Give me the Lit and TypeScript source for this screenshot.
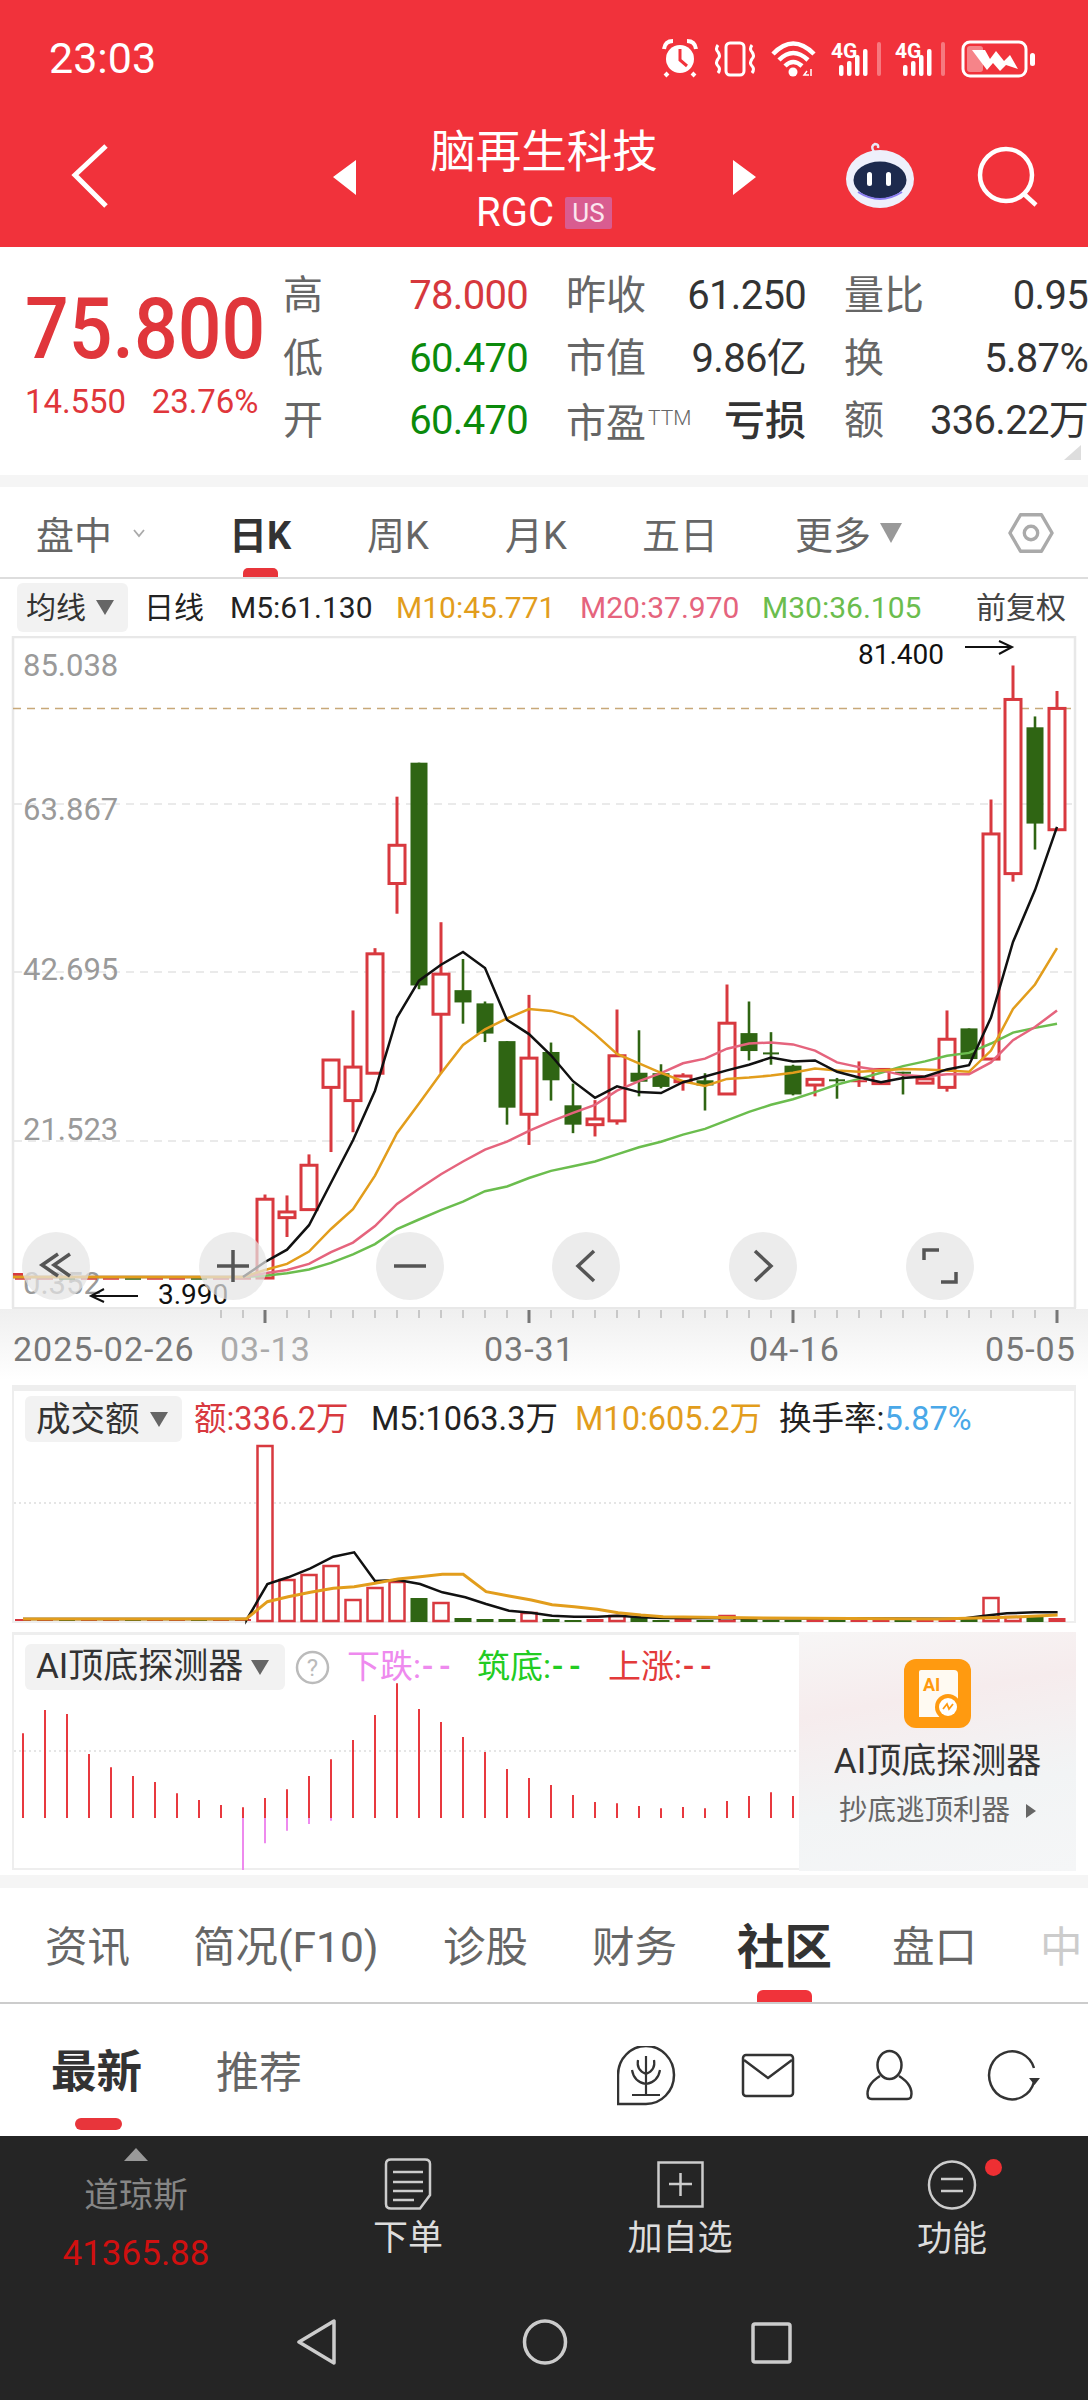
import { LitElement, html, svg, css } from "lit";
import { customElement } from "lit/decorators.js";

// candle data in measured chart units: [type, high, bodyTop, bodyBottom, low]
const CANDLES: [string, number, number, number, number][] = [
  ["r",1175,1185,1352,1352],["r",1177,1212,1224,1265],["r",1090,1113,1207,1207],["r",890,890,948,1085],
  ["r",785,905,976,1043],["r",653,665,918,918],["r",332,435,516,580],["g",260,260,732,740],
  ["r",598,708,793,918],["g",676,742,768,813],["g",766,770,834,852],["g",850,850,991,1027],
  ["r",752,886,1005,1070],["g",853,873,933,976],["g",940,986,1027,1045],["r",975,1015,1027,1052],
  ["r",783,881,1019,1027],["g",827,917,936,967],["g",899,918,947,950],["r",918,924,936,955],
  ["g",918,933,944,997],["r",730,812,962,962],["g",766,833,871,891],["g",831,876,878,900],
  ["g",900,902,963,965],["r",930,931,943,967],["g",928,933,935,972],["r",893,935,941,947],
  ["r",908,910,940,942],["g",915,917,922,963],["r",930,930,939,939],["r",785,846,948,957],
  ["g",823,823,888,888],["r",338,411,888,888],["r",54,126,495,512],["g",162,185,389,444],["r",108,145,402,402],
];
const M5 = [1318,1292,1240,1150,1060,955,800,722,688,661,695,805,835,880,935,970,946,958,960,937,925,912,900,885,893,891,915,927,937,928,925,910,901,800,640,530,396];
const M10 = [1335,1322,1296,1248,1206,1135,1045,982,918,858,825,802,782,786,798,835,877,897,917,935,945,930,927,923,917,908,912,915,912,909,910,912,915,870,782,730,653];
const M20 = [1342,1335,1322,1297,1277,1242,1195,1163,1132,1105,1080,1063,1040,1020,1002,985,955,935,918,897,887,866,855,853,857,870,895,905,912,922,925,920,920,895,848,820,785];
const M30 = [1347,1342,1334,1320,1302,1280,1248,1228,1208,1190,1168,1158,1140,1125,1115,1105,1090,1075,1063,1048,1036,1018,1000,985,973,958,942,930,917,903,893,881,875,855,832,822,813];

const VOL: [string, number][] = [["r",1446],["r",1580],["r",1575],["r",1566],["r",1600],["r",1588],["r",1582],["g",1598],["r",1603],["g",1618],["g",1619],["g",1619],["r",1613],["g",1619],["g",1620],["R",1619],["r",1616],["g",1617],["g",1620],["R",1619],["g",1620],["r",1616],["g",1619],["g",1620],["g",1620],["R",1619],["g",1620],["R",1619],["R",1619],["g",1620],["R",1619],["R",1619],["g",1619],["r",1598],["r",1617],["g",1617],["R",1618]];
const VB: [number, number][] = [[355,720],[385,612],[415,592],[447,565],[480,530],[510,517],[540,603],[573,600],[605,612],[637,637],[670,652],[700,672],[733,692],[765,698],[795,707],[827,710],[860,710],[890,707],[923,712],[955,714],[1350,716],[1385,716],[1415,708],[1450,700],[1490,697],[1523,697]];
const VO: [number, number][] = [[355,716],[385,665],[415,650],[447,637],[480,625],[510,620],[540,610],[573,597],[605,590],[637,583],[667,583],[700,635],[733,648],[765,660],[795,674],[827,680],[860,688],[890,698],[923,705],[955,710],[1100,714],[1350,717],[1450,712],[1523,705]];

const AI_TOPS = [1060,990,1002,1122,1162,1188,1206,1240,1260,1275,1282,1254,1228,1188,1138,1080,1005,910,987,1026,1071,1116,1167,1194,1215,1245,1266,1270,1278,1285,1281,1285,1263,1248,1237,1248];
const AI_PINK: Record<number, number> = { 10: 1470, 11: 1390, 12: 1352, 13: 1332, 14: 1322 };

const cy = (v: number) => 640 + v / 2.119;
const cx = (i: number) => 265 + 22 * i;
const RED = "#d8393f";
const GREEN = "#2f6513";

const maPath = (d: number[], colorStartX = 13) =>
  `M${colorStartX} ${cy(1350).toFixed(1)} L${cx(-1)} ${cy(1350).toFixed(1)} ` +
  d.map((v, i) => `L${cx(i)} ${cy(v).toFixed(1)}`).join(" ");

const volPath = (d: [number, number][]) =>
  `M23 1619 L${(d[0][0] / 1.44).toFixed(1)} 1619 ` +
  d.map(([x, y]) => `L${(x / 1.44).toFixed(1)} ${(1380 + y / 3).toFixed(1)}`).join(" ");

@customElement("app-root")
export class AppRoot extends LitElement {
  static styles = css`
    :host { display: block; width: 1088px; height: 2400px; overflow: hidden; background: #fff;
      font-family: Roboto, "Noto Sans CJK SC", sans-serif; color: #333; }
    svg { display: block; }
    .hdr { background: #f1323b; height: 247px; color: #fff; display: flex; flex-direction: column; }
    .status { height: 112px; display: flex; justify-content: space-between; align-items: flex-start; padding: 33px 48px 0 49px; box-sizing: border-box; }
    .time { font-size: 43px; line-height: 50px; }
    .nav { flex: 1; display: flex; justify-content: center; align-items: flex-start; position: relative; }
    .navart { position: absolute; inset: 0; }
    .title { display: flex; flex-direction: column; align-items: center; margin-top: 14px; margin-left: 0; }
    .name { font-size: 45.5px; line-height: 54px; }
    .code { display: flex; align-items: center; gap: 11px; margin-top: 17px; font-size: 40px; line-height: 32px; }
    .badge { background: #d95c90; width: 47px; height: 32px; display: flex; align-items: center; justify-content: center; font-size: 26px; color: #fbe6ef; border-radius: 2px; }

    .quote { height: 228px; display: flex; position: relative; }
    .pricebox { width: 283px; padding: 44px 0 0 25px; box-sizing: border-box; color: #e0363b; }
    .price { font-size: 77px; line-height: 70px; font-weight: 500; transform: scaleY(1.1); transform-origin: left top; }
    .chg { display: flex; gap: 26px; margin-top: 23px; font-size: 33px; line-height: 36px; letter-spacing: -0.1px; }
    .stats { flex: 1; display: grid; grid-template-columns: 120px 125px 118px 160px 121px 161px; grid-auto-rows: 62.5px; padding-top: 18px; align-items: center; }
    .lb { font-size: 40px; color: #666; line-height: 48px; white-space: nowrap; }
    .lb.mid { padding-left: 38px; }
    .ttm { font-size: 21px; font-weight: 300; vertical-align: 12px; margin-left: 2px; }
    .val { font-size: 40px; line-height: 48px; text-align: right; white-space: nowrap; color: #333; letter-spacing: -0.7px; }
    .val.up { color: #d6383d; }
    .val.dn { color: #0b8a0b; }
    .val.cj { font-size: 41px; font-weight: 500; letter-spacing: 0; }
    .corner { position: absolute; right: 7px; bottom: 15px; width: 17px; height: 15px; background: #ddd; clip-path: polygon(100% 0, 100% 100%, 0 100%); }
    .band { background: #f5f5f5; }
    .band.a { height: 12px; }
    .band.b { height: 13px; }

    .tabs { height: 92px; box-sizing: border-box; border-bottom: 2px solid #ddd; display: grid; grid-template-columns: 193px 138px 138px 137px 153px 213px 46px; padding-left: 36px; align-items: center; font-size: 38px; color: #666; }
    .tab { position: relative; height: 100%; display: flex; align-items: center; gap: 9px; padding-top: 1px; box-sizing: border-box; }
    .tab.on { color: #333; font-weight: 700; }
    .tab.on::after { content: ""; position: absolute; left: 14px; bottom: 0; width: 35px; height: 9px; background: #e8353b; border-radius: 5px 5px 0 0; }
    .chev { width: 12px; height: 12px; margin-left: 12px; }
    .tri { display: inline-block; width: 0; height: 0; border-left: 9px solid transparent; border-right: 9px solid transparent; border-top: 15px solid #666; }
    .tri.big { border-left-width: 11px; border-right-width: 11px; border-top: 20px solid #999; margin-left: 0; }

    .ind { height: 57px; display: grid; grid-template-columns: 127px 86px 166px 184px 182px 214px 100px; padding-left: 17px; align-items: center; font-size: 30px; line-height: 40px; color: #222; white-space: nowrap; }
    .chip { background: #f2f2f2; border-radius: 6px; display: flex; align-items: center; color: #333; box-sizing: border-box; }
    .chip.a { height: 49px; width: 111px; padding-left: 9px; gap: 10px; }
    .c5 { color: #222; } .c10 { color: #e29d1c; } .c20 { color: #e5647d; } .c30 { color: #6bbd4e; }
    .qfq { color: #444; }

    .chart { position: relative; height: 744px; }
    .fab { position: absolute; top: 596px; width: 68px; height: 68px; border-radius: 50%; background: rgba(228,228,228,.72); display: flex; align-items: center; justify-content: center; }
    .fab.p1 { left: 22px; } .fab.p2 { left: 199px; } .fab.p3 { left: 376px; } .fab.p4 { left: 552px; } .fab.p5 { left: 729px; } .fab.p6 { left: 906px; }
    .axis { font-size: 31px; fill: #9a9a9a; font-family: Roboto, sans-serif; }
    .mark { font-size: 28px; fill: #111; font-family: Roboto, sans-serif; }
    .date { font-size: 34px; fill: #777; letter-spacing: 1px; font-family: Roboto, sans-serif; }
    .date.fade { fill: #aaa; }

    .vol { height: 252px; display: grid; }
    .vol > * { grid-area: 1 / 1; }
    .volhead { display: grid; grid-template-columns: 169px 177px 204px 204px 260px; padding: 16px 0 0 25px; align-items: center; align-self: start; font-size: 32.5px; line-height: 46px; white-space: nowrap; color: #222; }
    .chip.b { height: 46px; width: 157px; padding-left: 11px; gap: 10px; font-size: 34.5px; }
    .chip.c { height: 46px; width: 260px; padding-left: 11px; gap: 8px; font-size: 35px; white-space: nowrap; }
    .red { color: #d8393f; } .blue { color: #4aa8e8; } .org { color: #e29d1c; }

    .ai { height: 243px; display: grid; grid-template-columns: 799px 277px; }
    .aileft { display: grid; }
    .aileft > * { grid-area: 1 / 1; }
    .aihead { display: flex; align-items: center; align-self: start; padding: 12px 0 0 25px; font-size: 33px; line-height: 46px; white-space: nowrap; }
    .help { width: 35px; height: 35px; margin-left: 10px; }
    .ai1 { color: #ee8aee; margin-left: 17px; width: 130px; }
    .ai2 { color: #22cc22; width: 131px; }
    .ai3 { color: #e33a3a; }
    .dash { letter-spacing: 6px; font-weight: 500; margin-left: 1px; }
    .promo { height: 239px; background: linear-gradient(170deg, #f7f6f6 0%, #f6eced 30%, #f2f4f5 65%, #f5f6f7 100%); display: flex; flex-direction: column; align-items: center; padding-top: 27px; box-sizing: border-box; }
    .promoicon { width: 67px; height: 69px; }
    .promot { font-size: 35px; line-height: 44px; margin-top: 12px; color: #333; white-space: nowrap; }
    .promos { display: flex; align-items: center; gap: 16px; font-size: 28.5px; line-height: 36px; margin-top: 9px; color: #666; white-space: nowrap; }
    .tri.r { border: 0; border-top: 7px solid transparent; border-bottom: 7px solid transparent; border-left: 10px solid #666; }

    .tabs2 { height: 116px; box-sizing: border-box; border-bottom: 2px solid #ccc; display: grid; grid-template-columns: 148px 250px 149px 145px 155px 148px 46px; padding-left: 45px; align-items: center; font-size: 42.5px; color: #666; white-space: nowrap; }
    .t2 { position: relative; height: 100%; display: flex; align-items: center; padding-bottom: 4px; box-sizing: border-box; }
    .t2.on { color: #333; font-weight: 700; font-size: 47.5px; }
    .t2.on::after { content: ""; position: absolute; left: 20px; bottom: 0; width: 55px; height: 12px; border-radius: 6px 6px 0 0; background: #f0333a; }
    .t2.dim { color: #ccc; overflow: hidden; }

    .sub { height: 132px; display: flex; align-items: flex-start; padding-left: 51px; position: relative; }
    .s1 { position: relative; font-size: 45.5px; font-weight: 700; line-height: 56px; margin-top: 41px; width: 165px; color: #333; }
    .s1::after { content: ""; position: absolute; left: 24px; top: 73px; width: 47px; height: 12px; border-radius: 6px; background: #e8353b; }
    .s2 { font-size: 43px; line-height: 56px; margin-top: 41px; color: #666; }
    .subicons { margin-left: auto; margin-top: 42px; margin-right: 48px; }

    .bar { height: 264px; background: #252525; color: #ddd; display: flex; flex-direction: column; }
    .items { display: grid; grid-template-columns: repeat(4, 272px); height: 183px; }
    .it { display: flex; flex-direction: column; align-items: center; font-size: 35px; position: relative; }
    .ic { margin-top: 22px; }
    .ic.b { margin-top: 25px; }
    .ic.c { margin-top: 24px; }
    .it span { line-height: 40px; margin-top: 9px; }
    .it span.b { margin-top: 11px; }
    .it span.c { margin-top: 10px; }
    .uptri { width: 24px; height: 13px; margin-top: 12px; background: #999; clip-path: polygon(50% 0, 100% 100%, 0 100%); }
    .dj { line-height: 48px; margin-top: 10px; color: #868686; font-size: 34.5px; }
    .djv { line-height: 40px; margin-top: 15px; color: #d01010; font-size: 35px; }
    .dot { position: absolute; left: 169px; top: 23px; width: 17px; height: 17px; border-radius: 50%; background: #ee2f33; }
    .sys { display: flex; justify-content: center; }
  `;

  private statusIcons() {
    const sig = (x: number) => svg`
      <text x=${x} y="55" font-size="21" fill="#fff" font-family="Roboto, sans-serif" font-weight="700">4G</text>
      <rect x=${x + 8} y="62" width="4.5" height="11" rx="2" fill="#fff"/>
      <rect x=${x + 16} y="58" width="4.5" height="15" rx="2" fill="#fff"/>
      <rect x=${x + 24} y="52" width="4.5" height="21" rx="2" fill="#fff"/>
      <rect x=${x + 32} y="46" width="4.5" height="27" rx="2" fill="#fff"/>
      <rect x=${x + 46} y="39" width="4" height="34" rx="2" fill="#fff" opacity=".35"/>`;
    return html`<svg width="385" height="50" viewBox="655 30 385 50">
      <circle cx="680" cy="56" r="14" fill="#fff"/>
      <path d="M680 46 V57 L687 63" stroke="#f1323b" stroke-width="3" fill="none"/>
      <path d="M664 46 Q665 38 673 38 M696 46 Q695 38 687 38 M668 70 L665 73 M692 70 L695 73" stroke="#fff" stroke-width="4" fill="none"/>
      <rect x="726" y="40" width="18" height="32" rx="4" fill="none" stroke="#fff" stroke-width="3"/>
      <path d="M718 42 q-3 4 0 7 q3 4 0 7 q-3 4 0 7 q3 3 0 7 M752 42 q-3 4 0 7 q3 4 0 7 q-3 4 0 7 q3 3 0 7" fill="none" stroke="#fff" stroke-width="3"/>
      <path d="M773 51 Q793 30 814 51 M779 57 Q793 43 808 57 M785 63 Q793 55 802 63" fill="none" stroke="#fff" stroke-width="4.5"/>
      <circle cx="793" cy="69" r="4.5" fill="#fff"/>
      <path d="M807 68 l-3 4 h5 M811 66 v7" stroke="#fff" stroke-width="1.5" fill="none"/>
      ${sig(831)}${sig(895)}
      <rect x="963" y="39" width="63" height="34" rx="7" fill="none" stroke="#fff" stroke-width="3"/>
      <rect x="967" y="43" width="16" height="26" rx="3" fill="#fff" opacity=".4"/>
      <rect x="1030" y="50" width="5" height="13" rx="2.5" fill="#fff"/>
      <path d="M972 47 L985 47 L990 56 L996 48 L1004 58 L1010 52 L1018 66 L1006 62 L1000 68 L993 60 L987 67 Z" fill="#fff"/>
    </svg>`;
  }

  private navArt() {
    return html`<svg class="navart" width="1088" height="135" viewBox="0 112 1088 135">
      <path d="M106 146 L75 175 L106 206" fill="none" stroke="#fff" stroke-width="5"/>
      <path d="M356 160 V195 L333 177 Z M733 160 V195 L756 177 Z" fill="#fff"/>
      <path d="M874 152 q-4 -6 1 -8 q4 0 3 4" fill="none" stroke="#e8e8f5" stroke-width="2.5"/>
      <ellipse cx="880" cy="179" rx="34" ry="29" fill="#eef0fb"/>
      <ellipse cx="880" cy="180" rx="26.5" ry="18.5" fill="#1d2a4d"/>
      <path d="M858 192 Q880 206 902 192" fill="none" stroke="#8a7cf0" stroke-width="2"/>
      <rect x="867" y="172" width="5" height="14" rx="2.5" fill="#fff"/>
      <rect x="886" y="172" width="5" height="14" rx="2.5" fill="#fff"/>
      <circle cx="1006" cy="175" r="26" fill="none" stroke="#fff" stroke-width="4.5"/>
      <path d="M1024 194 L1036 205" stroke="#fff" stroke-width="4.5"/>
    </svg>`;
  }

  private candles() {
    return CANDLES.map(([t, hi, top, bot, lo], i) => {
      const x = cx(i);
      const c = t === "r" ? RED : GREEN;
      const tp = cy(top), bt = cy(bot);
      const doji = bt - tp < 3;
      return svg`
        <line x1=${x} x2=${x} y1=${cy(hi)} y2=${cy(lo)} stroke=${c} stroke-width=${t === "r" ? 3 : 2.6}/>
        ${doji
          ? svg`<line x1=${x - 8} x2=${x + 8} y1=${tp} y2=${tp} stroke=${c} stroke-width="2"/>`
          : t === "r"
          ? svg`<rect x=${x - 8} y=${tp} width="16" height=${bt - tp} fill="#fff" stroke=${c} stroke-width="3"/>`
          : svg`<rect x=${x - 8.5} y=${tp} width="17" height=${bt - tp} fill=${c}/>`}`;
    });
  }

  private mainChart() {
    const ticks = [];
    for (let i = -2; i <= 36; i++) {
      const major = i % 12 === 0;
      ticks.push(svg`<line x1=${cx(i)} x2=${cx(i)} y1="1310" y2=${major ? 1323 : 1318} stroke=${major ? "#777" : "#bbb"} stroke-width=${major ? 3 : 1.5}/>`);
    }
    const early = [];
    for (let i = -11; i < 0; i++) {
      const red = i % 3 !== 0;
      early.push(svg`<line x1=${cx(i) - 8} x2=${cx(i) + 8} y1=${cy(1353)} y2=${cy(1353)} stroke=${red ? RED : GREEN} stroke-width="2.5"/>`);
    }
    return html`<svg width="1088" height="744" viewBox="0 636 1088 744">
      <defs><linearGradient id="dg" x1="0" y1="0" x2="0" y2="1"><stop offset="0" stop-color="#efefef"/><stop offset="1" stop-color="#fff"/></linearGradient></defs>
      <rect x="0" y="1309" width="1088" height="71" fill="url(#dg)"/>
      <path d="M13 1308 V637 H1075 V1308" fill="none" stroke="#e8e8e8" stroke-width="2.5"/>
      <path d="M12 1308 H1076" stroke="#e8e8e8" stroke-width="2"/>
      <g stroke="#e4e4e4" stroke-width="1.5" stroke-dasharray="8 6">
        <line x1="14" x2="1074" y1="804" y2="804"/>
        <line x1="14" x2="1074" y1="972" y2="972"/>
        <line x1="14" x2="1074" y1="1141" y2="1141"/>
      </g>
      <line x1="13" x2="1074" y1="708.5" y2="708.5" stroke="#c8a878" stroke-width="1.5" stroke-dasharray="8 6"/>
      <text class="axis" x="23" y="676">85.038</text>
      <text class="axis" x="23" y="820">63.867</text>
      <text class="axis" x="23" y="980">42.695</text>
      <text class="axis" x="23" y="1140">21.523</text>
      <text class="axis" x="23" y="1294">0.352</text>
      <rect x="13" y="1273" width="10" height="4" fill=${RED}/>
      ${early}
      ${this.candles()}
      <path d=${maPath(M30)} fill="none" stroke="#6bbd4e" stroke-width="2.5"/>
      <path d=${maPath(M20)} fill="none" stroke="#e5647d" stroke-width="2.5"/>
      <path d=${maPath(M10)} fill="none" stroke="#e29d1c" stroke-width="2.5"/>
      <path d=${`M243 ${cy(1350)} ` + M5.map((v, i) => `L${cx(i)} ${cy(v).toFixed(1)}`).join(" ")} fill="none" stroke="#111" stroke-width="2.5"/>
      <text class="mark" x="158" y="1304">3.990</text>
      <path d="M138 1296 H91 M104 1289 L91 1296 L104 1302" fill="none" stroke="#111" stroke-width="2"/>
      <text class="mark" x="858" y="664">81.400</text>
      <path d="M965 647 H1012 M999 641 L1012 647 L999 654" fill="none" stroke="#111" stroke-width="2"/>
      ${ticks}
      <text class="date" x="13" y="1361">2025-02-26</text>
      <text class="date fade" x="220" y="1361">03-13</text>
      <text class="date" x="484" y="1361">03-31</text>
      <text class="date" x="749" y="1361">04-16</text>
      <text class="date" x="985" y="1361">05-05</text>
    </svg>`;
  }

  private fabs() {
    const st = "fill:none;stroke:#555;stroke-width:3.5";
    return html`
      <div class="fab p1"><svg width="40" height="30" viewBox="0 0 40 30"><path d="M22 3 L6 14 L22 25 M34 3 L18 14 L34 25" style=${st}/></svg></div>
      <div class="fab p2"><svg width="34" height="34" viewBox="0 0 34 34"><path d="M1 17 H33 M17 1 V33" style=${st}/></svg></div>
      <div class="fab p3"><svg width="34" height="8" viewBox="0 0 34 8"><path d="M1 4 H33" style=${st}/></svg></div>
      <div class="fab p4"><svg width="22" height="34" viewBox="0 0 22 34"><path d="M19 2 L3 17 L19 32" style=${st}/></svg></div>
      <div class="fab p5"><svg width="22" height="34" viewBox="0 0 22 34"><path d="M3 2 L19 17 L3 32" style=${st}/></svg></div>
      <div class="fab p6"><svg width="36" height="36" viewBox="0 0 36 36"><path d="M2 12 V2 H17 M34 24 V34 H19" style=${st}/></svg></div>`;
  }

  private volChart() {
    return html`<svg width="1088" height="252" viewBox="0 1380 1088 252">
      <rect x="12" y="1385" width="1064" height="6" fill="#eee"/>
      <rect x="12" y="1385" width="2" height="237" fill="#eee"/>
      <rect x="1074" y="1385" width="2" height="237" fill="#eee"/>
      <line x1="14" x2="1074" y1="1503" y2="1503" stroke="#ddd" stroke-width="1.5" stroke-dasharray="2 3"/>
      <line x1="12" x2="1076" y1="1622" y2="1622" stroke="#eee" stroke-width="2"/>
      ${[-11,-10,-9,-8,-7,-6,-5,-4,-3,-2,-1].map((i) => svg`<line x1=${cx(i) - 8} x2=${cx(i) + 8} y1="1620" y2="1620" stroke=${i % 3 ? RED : GREEN} stroke-width="2"/>`)}
      ${VOL.map(([t, top], i) => {
        const x = cx(i);
        if (t === "g") return svg`<rect x=${x - 8.5} y=${top} width="17" height=${1622 - top} fill=${GREEN}/>`;
        if (t === "R") return svg`<rect x=${x - 8.5} y=${top} width="17" height=${1622 - top} fill=${RED}/>`;
        return svg`<rect x=${x - 7.5} y=${top} width="15" height=${1621 - top} fill="#fff" stroke=${RED} stroke-width="2.5"/>`;
      })}
      <path d=${volPath(VB)} fill="none" stroke="#111" stroke-width="2.5"/>
      <path d=${volPath(VO)} fill="none" stroke="#e29d1c" stroke-width="3"/>
    </svg>`;
  }

  private aiChart() {
    return html`<svg width="799" height="243" viewBox="0 1632 799 243">
      <rect x="12" y="1632" width="787" height="3" fill="#eee"/>
      <rect x="12" y="1632" width="2" height="237" fill="#eee"/>
      <rect x="12" y="1868" width="787" height="2" fill="#eee"/>
      <line x1="14" x2="799" y1="1751" y2="1751" stroke="#ddd" stroke-width="1.5" stroke-dasharray="2 3"/>
      ${AI_TOPS.map((t, k) => {
        const x = 23 + 22 * k;
        const pink = AI_PINK[k];
        return svg`<line x1=${x} x2=${x} y1=${1380 + t / 3} y2="1818" stroke="#e8393f" stroke-width="2"/>
          ${pink ? svg`<line x1=${x} x2=${x} y1="1818" y2=${1380 + pink / 3} stroke="#ee8aee" stroke-width="2"/>` : ""}`;
      })}
    </svg>`;
  }

  render() {
    return html`
      <div class="hdr">
        <div class="status"><div class="time">23:03</div>${this.statusIcons()}</div>
        <div class="nav">
          ${this.navArt()}
          <div class="title">
            <div class="name">脑再生科技</div>
            <div class="code">RGC<span class="badge">US</span></div>
          </div>
        </div>
      </div>

      <div class="quote">
        <div class="pricebox">
          <div class="price">75.800</div>
          <div class="chg"><span>14.550</span><span>23.76%</span></div>
        </div>
        <div class="stats">
          <div class="lb">高</div><div class="val up">78.000</div>
          <div class="lb mid">昨收</div><div class="val">61.250</div>
          <div class="lb mid">量比</div><div class="val">0.95</div>
          <div class="lb">低</div><div class="val dn">60.470</div>
          <div class="lb mid">市值</div><div class="val">9.86亿</div>
          <div class="lb mid">换</div><div class="val">5.87%</div>
          <div class="lb">开</div><div class="val dn">60.470</div>
          <div class="lb mid">市盈<span class="ttm">TTM</span></div><div class="val cj">亏损</div>
          <div class="lb mid">额</div><div class="val">336.22万</div>
        </div>
        <div class="corner"></div>
      </div>
      <div class="band a"></div>

      <div class="tabs">
        <div class="tab">盘中<svg class="chev" viewBox="0 0 12 12"><path d="M1 3 L6 9 L11 3" fill="none" stroke="#aaa" stroke-width="1.8"/></svg></div>
        <div class="tab on">日K</div>
        <div class="tab">周K</div>
        <div class="tab">月K</div>
        <div class="tab">五日</div>
        <div class="tab">更多<span class="tri big"></span></div>
        <div class="tab"><svg width="48" height="44" viewBox="0 0 48 44"><path d="M13 3 H35 L46 22 L35 41 H13 L2 22 Z" fill="none" stroke="#aaa" stroke-width="3.5" stroke-linejoin="round"/><circle cx="24" cy="22" r="7" fill="none" stroke="#aaa" stroke-width="3.5"/></svg></div>
      </div>

      <div class="ind">
        <div class="chip a">均线<span class="tri"></span></div>
        <div>日线</div>
        <div class="c5">M5:61.130</div>
        <div class="c10">M10:45.771</div>
        <div class="c20">M20:37.970</div>
        <div class="c30">M30:36.105</div>
        <div class="qfq">前复权</div>
      </div>

      <div class="chart">${this.mainChart()}${this.fabs()}</div>

      <div class="vol">
        ${this.volChart()}
        <div class="volhead">
          <div class="chip b">成交额<span class="tri"></span></div>
          <div class="red">额:336.2万</div>
          <div>M5:1063.3万</div>
          <div class="org">M10:605.2万</div>
          <div>换手率:<span class="blue">5.87%</span></div>
        </div>
      </div>

      <div class="ai">
        <div class="aileft">
          ${this.aiChart()}
          <div class="aihead">
            <div class="chip c">AI顶底探测器<span class="tri"></span></div>
            <svg class="help" viewBox="0 0 35 35"><circle cx="17.5" cy="17.5" r="15.5" fill="none" stroke="#bbb" stroke-width="2.5"/><text x="17.5" y="26" font-size="24" fill="#bbb" text-anchor="middle" font-family="Roboto, sans-serif">?</text></svg>
            <div class="ai1">下跌:<span class="dash">--</span></div>
            <div class="ai2">筑底:<span class="dash">--</span></div>
            <div class="ai3">上涨:<span class="dash">--</span></div>
          </div>
        </div>
        <div class="promo">
          <svg class="promoicon" viewBox="0 0 67 69">
            <rect width="67" height="69" rx="12" fill="#ff9a10"/>
            <path d="M17 11 H50 Q54 11 54 15 V52 Q54 58 48 58 H15 V13 Q15 11 17 11 Z" fill="#fff" opacity=".95"/>
            <text x="19" y="32" font-size="18" font-weight="700" fill="#ff9a10" font-family="Roboto, sans-serif">AI</text>
            <circle cx="44" cy="48" r="13" fill="#ff9a10"/>
            <circle cx="44" cy="48" r="9" fill="#fff"/>
            <path d="M39 50 L43 45 L45 50 L49 45" fill="none" stroke="#ff9a10" stroke-width="1.8"/>
          </svg>
          <div class="promot">AI顶底探测器</div>
          <div class="promos">抄底逃顶利器<span class="tri r"></span></div>
        </div>
      </div>
      <div class="band b"></div>

      <div class="tabs2">
        <div class="t2">资讯</div>
        <div class="t2">简况(F10)</div>
        <div class="t2">诊股</div>
        <div class="t2">财务</div>
        <div class="t2 on">社区</div>
        <div class="t2">盘口</div>
        <div class="t2 dim">中</div>
      </div>

      <div class="sub">
        <div class="s1">最新</div>
        <div class="s2">推荐</div>
        <svg class="subicons" width="423" height="60" viewBox="617 2046 423 60">
          <g fill="none" stroke="#333" stroke-width="2.5">
            <path d="M618 2104 V2075 A28 29 0 1 1 646 2104 Z"/>
            <path d="M646 2056 V2094 M632 2095 H660 M638 2060 Q636 2070 646 2074 M654 2060 Q656 2070 646 2074 M632 2070 Q634 2082 646 2084 M660 2070 Q658 2082 646 2084" stroke-width="2.2"/>
            <rect x="743" y="2055" width="50" height="41" rx="3"/>
            <path d="M744 2060 L768 2078 L792 2060"/>
            <ellipse cx="889.5" cy="2065" rx="12" ry="14"/>
            <path d="M880 2076 C870 2082 866 2090 868 2097 Q869 2099 872 2099 H907 Q910 2099 911 2097 C913 2090 909 2082 899 2076"/>
            <path d="M1034 2068 A23 24 0 1 0 1022 2097 A23 24 0 0 0 1034 2082"/>
          </g>
          <path d="M1029 2078 H1040 L1034.5 2085 Z" fill="#333"/>
        </svg>
      </div>

      <div class="bar">
        <div class="items">
          <div class="it">
            <div class="uptri"></div>
            <div class="dj">道琼斯</div>
            <div class="djv">41365.88</div>
          </div>
          <div class="it">
            <svg class="ic" width="48" height="52" viewBox="0 0 48 52" fill="none" stroke="#ccc" stroke-width="2.5">
              <path d="M7 1.5 H41 Q46 1.5 46 6 V37 L36 50.5 H7 Q2 50.5 2 46 V6 Q2 1.5 7 1.5 Z"/>
              <path d="M9 14 H39 M9 24 H39 M9 33 H39 M9 42 H30"/>
            </svg>
            <span>下单</span>
          </div>
          <div class="it">
            <svg class="ic b" width="47" height="47" viewBox="0 0 47 47" fill="none" stroke="#ccc" stroke-width="2.5">
              <rect x="1.5" y="1.5" width="44" height="44"/><path d="M12 23 H35 M23.5 12 V35"/>
            </svg>
            <span class="b">加自选</span>
          </div>
          <div class="it">
            <svg class="ic c" width="50" height="50" viewBox="0 0 50 50" fill="none" stroke="#ccc" stroke-width="2.5">
              <ellipse cx="25" cy="25" rx="23" ry="23.5"/><path d="M14 19 H36 M14 31 H36"/>
            </svg>
            <span class="c">功能</span>
            <div class="dot"></div>
          </div>
        </div>
        <div class="sys">
          <svg width="495" height="46" viewBox="296 2318 495 46" fill="none" stroke="#ccc" stroke-width="3.5">
            <path d="M333 2320 V2362 L298 2341 Z" stroke-linejoin="round"/>
            <ellipse cx="544" cy="2341" rx="20.5" ry="21"/>
            <rect x="752" y="2323" width="37" height="38" rx="2"/>
          </svg>
        </div>
      </div>
    `;
  }
}
